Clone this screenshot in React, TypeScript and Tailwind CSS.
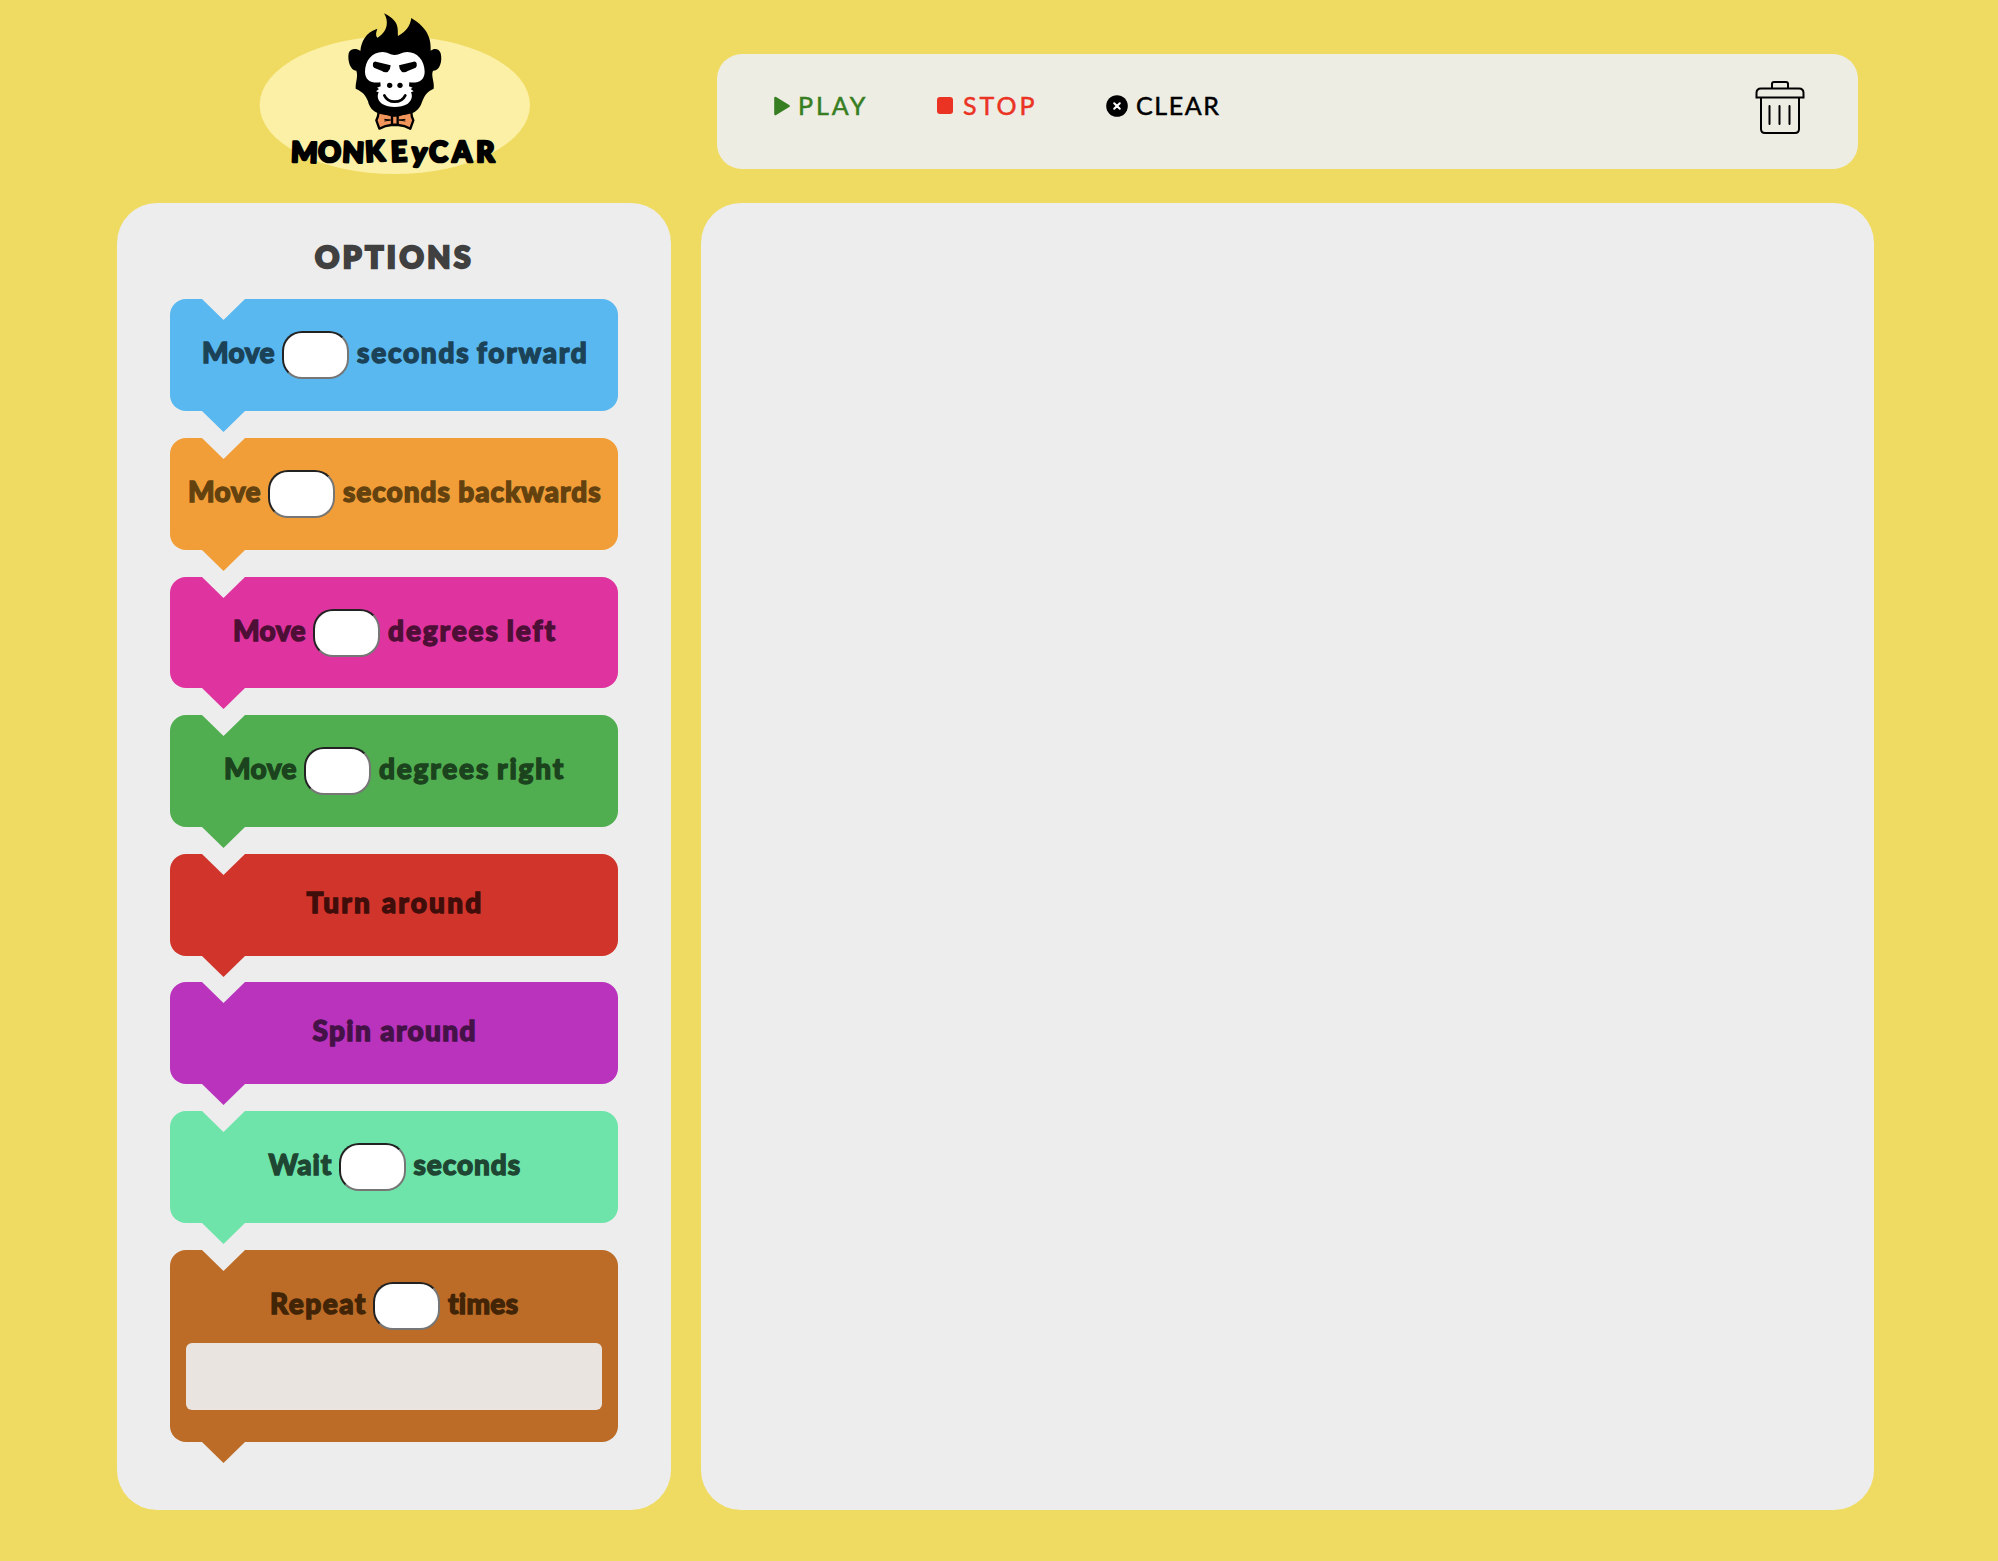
type Label = { text: string; className: string };

type BlockSpec = {
  before: Label;
  after?: Label;
  className: string;
  nub: string;
  slot?: boolean;
};

const BLOCKS: BlockSpec[] = [
  {
    before: { text: "Move", className: "w-[72px] tracking-[0.4px]" },
    after: { text: "seconds forward", className: "w-[229px] tracking-[1.75px] [word-spacing:-2px]" },
    className: "h-[112px] bg-[#58b8ef] pt-8 text-[#1b4257] mb-[27px]",
    nub: "bg-[#58b8ef]",
  },
  {
    before: { text: "Move", className: "w-[72px] tracking-[0.4px]" },
    after: { text: "seconds backwards", className: "w-[257px] tracking-[0.95px]" },
    className: "h-[112px] bg-[#f29e38] pt-8 text-[#64420f] mb-[27px]",
    nub: "bg-[#f29e38]",
  },
  {
    before: { text: "Move", className: "w-[72px] tracking-[0.4px]" },
    after: { text: "degrees left", className: "w-[167px] tracking-[1.9px] [word-spacing:-1.5px]" },
    className: "h-[111px] bg-[#df339f] pt-8 text-[#4d0f36] mb-[27px]",
    nub: "bg-[#df339f]",
  },
  {
    before: { text: "Move", className: "w-[72px] tracking-[0.4px]" },
    after: { text: "degrees right", className: "w-[185px] tracking-[1.8px] [word-spacing:-1.5px]" },
    className: "h-[112px] bg-[#51ae50] pt-8 text-[#1b431d] mb-[27px]",
    nub: "bg-[#51ae50]",
  },
  {
    before: { text: "Turn around", className: "w-[175px] tracking-[2.25px] [word-spacing:0.5px]" },
    className: "h-[102px] bg-[#d0342a] pt-[27px] text-[#3f0d0a] mb-[26px]",
    nub: "bg-[#d0342a]",
  },
  {
    before: { text: "Spin around", className: "w-[163px] tracking-[1.35px]" },
    className: "h-[102px] bg-[#b933bd] pt-[27px] text-[#451248] mb-[27px]",
    nub: "bg-[#b933bd]",
  },
  {
    before: { text: "Wait", className: "w-[62px] tracking-[0.9px]" },
    after: { text: "seconds", className: "w-[106px] tracking-[0.9px]" },
    className: "h-[112px] bg-[#6ee4aa] pt-8 text-[#1e4632] mb-[27px]",
    nub: "bg-[#6ee4aa]",
  },
  {
    before: { text: "Repeat", className: "w-[95px] tracking-[1.5px]" },
    after: { text: "times", className: "w-[70px] tracking-[0.3px]" },
    className: "h-[192px] bg-[#bc6c27] pt-8 text-[#422407]",
    nub: "bg-[#bc6c27]",
    slot: true,
  },
];

function Block({ before, after, className, nub, slot }: BlockSpec) {
  return (
    <div className={`relative w-[448px] shrink-0 rounded-[16px] ${className}`}>
      <span className="absolute left-8 top-0 h-[21px] w-[43px] bg-[#ededed] [clip-path:polygon(0_0,100%_0,50%_100%)]" />
      <span
        className={`absolute left-8 top-full h-[21px] w-[43px] [clip-path:polygon(0_0,100%_0,50%_100%)] ${nub}`}
      />
      <div className="flex h-12 items-start justify-center gap-2 text-[28px] leading-[42px] font-black [-webkit-text-stroke:1.35px_currentColor]">
        <span className={`whitespace-nowrap ${before.className}`}>{before.text}</span>
        {after && (
          <>
            <input
              type="text"
              className="h-12 w-[67px] rounded-[20px] border-2 border-t-[#222] border-r-[#767676] border-b-[#767676] border-l-[#222] bg-white px-3 text-lg outline-none"
            />
            <span className={`whitespace-nowrap ${after.className}`}>{after.text}</span>
          </>
        )}
      </div>
      {slot && <div className="mx-4 mt-[13px] h-[67px] rounded-[6px] bg-[#eae4e0]" />}
    </div>
  );
}

function Logo() {
  return (
    <svg viewBox="0 0 930 570" className="h-[190px] w-[310px]">
      <ellipse cx="464.500" cy="315" rx="405.500" ry="207" fill="#fbf0a5" />
      <g stroke="#000" strokeWidth="7" strokeLinejoin="round">
        <path
          d="M416 336 Q415 350 409 361 L418 386 Q436 376 454 375 H475 Q494 376 511 386 L520 361 Q514 350 514 336 Z"
          fill="#f2955a"
        />
        <path d="M456 347 H473 V374 H456 Z" fill="#f2955a" />
        <path d="M433 358 L452 360 L433 363 M496 358 L477 360 L496 363" fill="none" strokeWidth="3" />
        <path d="M422 336 L455 346 M507 336 L474 346" fill="none" />
      </g>
      <path
        d="M361 153 C364 125 376 98 412 86 C408 97 406 106 412 113 C428 104 437 92 440 76 C442 62 439 51 432 40 C457 52 473 68 473 88 C474 96 473 102 474 108 C498 94 510 80 514 54 C549 76 575 102 572 152 C583 143 598 146 602 160 C608 184 599 214 579 212 C572 228 584 244 581 266 C560 275 553 288 546 306 C540 325 528 336 514 340 C490 349 440 349 414 340 C398 333 388 322 384 304 C378 288 370 276 347 266 C346 247 355 230 349 212 C331 212 322 182 326 160 C331 145 349 144 361 153 Z"
        fill="#000"
      />
      <path
        d="M375 215 C375 182 397 156 427 156 C445 156 449 165 464 165 C480 165 484 156 502 156 C532 156 554 182 554 215 C554 240 535 251 508 247 L507 259 L518 263 L512 267 L521 274 L513 277 C520 292 512 305 502 312 C482 324 446 324 427 312 C416 305 409 292 416 277 L408 274 L417 267 L411 263 L422 259 L421 247 C394 251 375 240 375 215 Z"
        fill="#fff"
      />
      <path
        d="M399 190 Q401 184 408 185 L452 196 Q452 208 443 216 Q432 218 426 213 L402 203 Q397 198 399 190 Z M530 190 Q528 184 521 185 L477 196 Q477 208 486 216 Q497 218 503 213 L527 203 Q532 198 530 190 Z"
        fill="#000"
      />
      <circle cx="449" cy="256" r="8" />
      <circle cx="480" cy="256" r="8" />
      <path d="M433 286 Q442 305 464 305 Q487 305 496 286" fill="none" stroke="#000" strokeWidth="8" strokeLinecap="round" />
      <text
        x="152 235 306 377 454 514 568 637 709"
        y="485"
        rotate="2 0 3 -3 -2 4 0 0 0"
        className="[font-family:Lato,sans-serif] text-[84px] font-black"
        fill="#000"
        stroke="#000"
        strokeWidth="8"
        strokeLinejoin="round"
      >
        MONKEyCAR
      </text>
    </svg>
  );
}

function TrashIcon() {
  return (
    <svg viewBox="0 0 50 54" className="h-[54px] w-[50px]" fill="none" stroke="#000" strokeWidth="2" strokeLinecap="round">
      <path d="M17 8 V4 Q17 2 19 2 H31 Q33 2 33 4 V8" />
      <path d="M1.500 17.500 V13 Q1.500 8.500 6 8.500 H44 Q48.500 8.500 48.500 13 V17.500 Z" strokeLinecap="square" />
      <path d="M6 18 V49 Q6 53 10 53 H40 Q44 53 44 49 V18" />
      <path d="M14.500 26 V44 M24.500 26 V44 M34.500 26 V44" />
    </svg>
  );
}

export default function App() {
  return (
    <div className="flex h-[1561px] w-[1998px] flex-col overflow-hidden bg-[#f0db62] [font-family:Lato,sans-serif]">
      <header className="flex h-[203px] shrink-0 items-start">
        <div className="ml-60 w-[477px]">
          <Logo />
        </div>
        <div className="mt-[54px] flex h-[115px] w-[1141px] items-start rounded-[25px] bg-[#eeede4] pl-[57px] text-[25px] leading-[30px] [-webkit-text-stroke:0.5px_currentColor]">
          <button className="mt-[37px] flex w-[163px] items-center text-[#377e22]">
            <svg viewBox="0 0 16 20" className="h-5 w-4">
              <path d="M1.500 2 L14.500 10 L1.500 18 Z" fill="currentColor" stroke="currentColor" strokeWidth="2.600" strokeLinejoin="round" />
            </svg>
            <span className="-mt-px ml-2 tracking-[2.9px]">PLAY</span>
          </button>
          <button className="mt-[37px] flex w-[169px] items-center text-[#ea3323]">
            <span className="h-[17px] w-4 rounded-[3px] bg-[#ea3323]" />
            <span className="-mt-px ml-[10px] tracking-[3px]">STOP</span>
          </button>
          <button className="mt-[37px] flex items-center text-black">
            <svg viewBox="0 0 22 22" className="h-[22px] w-[22px]">
              <circle cx="11" cy="11" r="10.800" fill="#000" />
              <path d="M8.200 8.200 L13.800 13.800 M13.800 8.200 L8.200 13.800" stroke="#fff" strokeWidth="2" strokeLinecap="round" />
            </svg>
            <span className="-mt-px ml-2 tracking-[1.6px]">CLEAR</span>
          </button>
          <button className="mt-[25.500px] mr-[53.500px] ml-auto">
            <TrashIcon />
          </button>
        </div>
      </header>
      <main className="flex h-[1307px] gap-[30px] pl-[117px]">
        <section className="flex w-[554px] flex-col items-center rounded-[40px] bg-[#ededed]">
          <h1 className="mt-[33px] mb-[23px] h-10 pl-px text-[30px] leading-10 font-black tracking-[3.500px] text-[#404040] [-webkit-text-stroke:2.4px_currentColor]">
            OPTIONS
          </h1>
          {BLOCKS.map((block, i) => (
            <Block key={i} {...block} />
          ))}
        </section>
        <section className="w-[1173px] rounded-[40px] bg-[#ededed]" />
      </main>
    </div>
  );
}
